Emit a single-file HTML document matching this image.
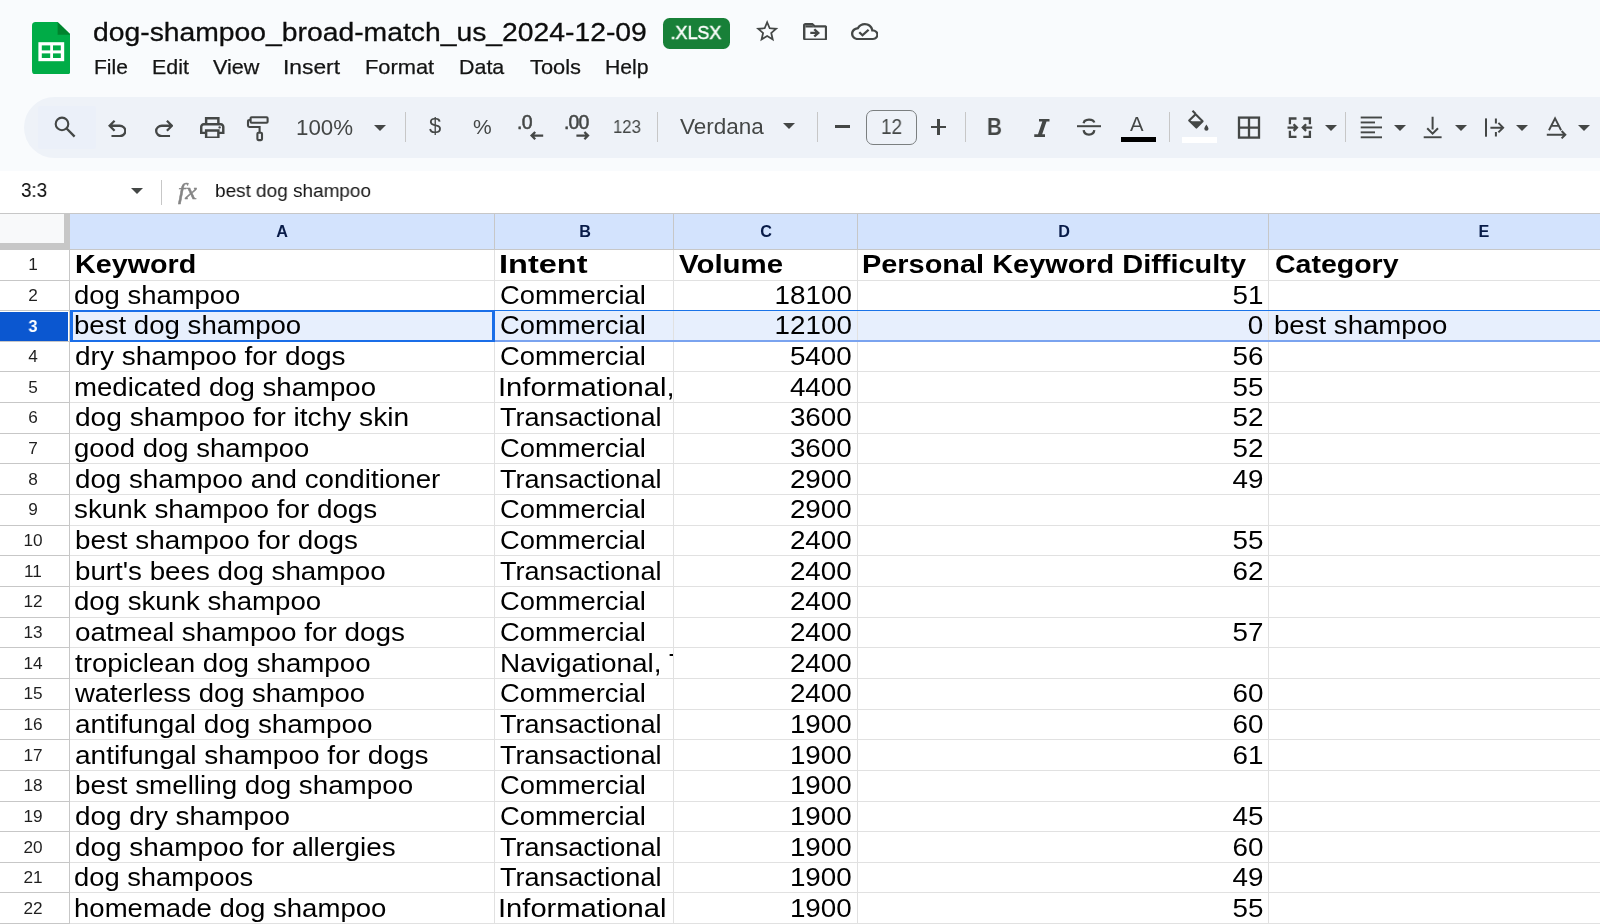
<!DOCTYPE html>
<html><head><meta charset="utf-8"><title>dog-shampoo_broad-match_us_2024-12-09</title>
<style>
html,body{margin:0;padding:0;}
body{width:1600px;height:924px;position:relative;overflow:hidden;background:#fff;font-family:'Liberation Sans', sans-serif;}
.t{position:absolute;white-space:pre;will-change:transform;}
.clip{position:absolute;overflow:hidden;}
svg{display:block;}
</style></head><body>
<div style="position:absolute;left:0.00px;top:0.00px;width:1600.00px;height:170.50px;background:#f9fbfd;"></div>
<svg style="position:absolute;left:31.80px;top:21.50px;" width="38.6" height="52.4" viewBox="0 0 38.6 52.4"><path d="M3.6 0 H25.6 L38.6 12.7 V48.8 Q38.6 52.4 35 52.4 H3.6 Q0 52.4 0 48.8 V3.6 Q0 0 3.6 0Z" fill="#00ac47"/><path d="M25.6 0 L38.6 12.7 H25.6Z" fill="#00832d"/><rect x="6.4" y="20.2" width="25.8" height="19.0" fill="#fff"/><rect x="9.8" y="23.4" width="8.4" height="5.0" fill="#00ac47"/><rect x="21.0" y="23.4" width="7.8" height="5.0" fill="#00ac47"/><rect x="9.8" y="31.4" width="8.4" height="4.6" fill="#00ac47"/><rect x="21.0" y="31.4" width="7.8" height="4.6" fill="#00ac47"/></svg>
<div class="t" style="left:92.50px;top:19.27px;font-size:26.5px;line-height:26.5px;font-weight:400;color:#0d0d0d;transform:scaleX(1.068);transform-origin:left 0;font-family:'Liberation Sans', sans-serif;-webkit-text-stroke:0.3px #0d0d0d;">dog-shampoo_broad-match_us_2024-12-09</div>
<div style="position:absolute;left:663.30px;top:18.30px;width:66.50px;height:30.50px;background:#188038;border-radius:6.5px;"></div>
<div class="t" style="left:696.20px;top:23.92px;font-size:18.4px;line-height:18.4px;font-weight:400;color:#fff;transform:translateX(-50%) scaleX(0.975);font-family:'Liberation Sans', sans-serif;-webkit-text-stroke:0.45px #fff;">.XLSX</div>
<svg preserveAspectRatio="none" style="position:absolute;left:755.50px;top:20.20px;overflow:visible;" width="22.3" height="21.2" viewBox="2 2 20 19"><path d="M22 9.24l-7.19-.62L12 2 9.19 8.63 2 9.24l5.46 4.73L5.82 21 12 17.27 18.18 21l-1.63-7.03L22 9.24zM12 15.4l-3.76 2.27 1-4.28-3.32-2.88 4.38-.38L12 6.1l1.71 4.04 4.38.38-3.32 2.88 1 4.28L12 15.4z" fill="#444746"/></svg>
<svg preserveAspectRatio="none" style="position:absolute;left:803.00px;top:22.70px;" width="24.3" height="17.7" viewBox="2 4 20 16"><path d="M20 6h-8l-2-2H4c-1.1 0-1.99.9-1.99 2L2 18c0 1.1.9 2 2 2h16c1.1 0 2-.9 2-2V8c0-1.1-.9-2-2-2zm0 12H4V6h5.17l2 2H20v10zm-7.84-6H8v2h4.16l-1.59 1.59L11.99 17 16 13.01 11.99 9l-1.41 1.41L12.16 12z" fill="#444746"/><path d="M4 6h5.17l2 2H4z" fill="#444746"/></svg>
<svg preserveAspectRatio="none" style="position:absolute;left:850.70px;top:22.70px;" width="27.6" height="17.0" viewBox="0 4 24 16"><path d="M19.35 10.04C18.67 6.59 15.64 4 12 4 9.11 4 6.6 5.64 5.35 8.04 2.34 8.36 0 10.91 0 14c0 3.31 2.69 6 6 6h13c2.76 0 5-2.24 5-5 0-2.640-2.05-4.78-4.65-4.96zM19 18H6c-2.21 0-4-1.790-4-4 0-2.05 1.53-3.76 3.56-3.97l1.07-.11.5-.95C8.08 7.14 9.94 6 12 6c2.62 0 4.88 1.86 5.39 4.43l.3 1.5 1.53.11c1.56.1 2.78 1.41 2.78 2.96 0 1.65-1.35 3-3 3zm-9-3.82l-2.09-2.09L6.5 13.5 10 17l6.010-6.010-1.41-1.41z" fill="#444746"/></svg>
<div class="t" style="left:94.00px;top:56.22px;font-size:21px;line-height:21px;font-weight:400;color:#141414;font-family:'Liberation Sans', sans-serif;-webkit-text-stroke:0.25px #141414;">File</div>
<div class="t" style="left:152.20px;top:56.22px;font-size:21px;line-height:21px;font-weight:400;color:#141414;transform:scaleX(1.02);transform-origin:left 0;font-family:'Liberation Sans', sans-serif;-webkit-text-stroke:0.25px #141414;">Edit</div>
<div class="t" style="left:213.20px;top:56.22px;font-size:21px;line-height:21px;font-weight:400;color:#141414;transform:scaleX(1.03);transform-origin:left 0;font-family:'Liberation Sans', sans-serif;-webkit-text-stroke:0.25px #141414;">View</div>
<div class="t" style="left:283.00px;top:56.22px;font-size:21px;line-height:21px;font-weight:400;color:#141414;transform:scaleX(1.085);transform-origin:left 0;font-family:'Liberation Sans', sans-serif;-webkit-text-stroke:0.25px #141414;">Insert</div>
<div class="t" style="left:364.60px;top:56.22px;font-size:21px;line-height:21px;font-weight:400;color:#141414;transform:scaleX(1.04);transform-origin:left 0;font-family:'Liberation Sans', sans-serif;-webkit-text-stroke:0.25px #141414;">Format</div>
<div class="t" style="left:459.00px;top:56.22px;font-size:21px;line-height:21px;font-weight:400;color:#141414;transform:scaleX(1.02);transform-origin:left 0;font-family:'Liberation Sans', sans-serif;-webkit-text-stroke:0.25px #141414;">Data</div>
<div class="t" style="left:529.50px;top:56.22px;font-size:21px;line-height:21px;font-weight:400;color:#141414;transform:scaleX(1.04);transform-origin:left 0;font-family:'Liberation Sans', sans-serif;-webkit-text-stroke:0.25px #141414;">Tools</div>
<div class="t" style="left:605.20px;top:56.22px;font-size:21px;line-height:21px;font-weight:400;color:#141414;transform:scaleX(1.01);transform-origin:left 0;font-family:'Liberation Sans', sans-serif;-webkit-text-stroke:0.25px #141414;">Help</div>
<div style="position:absolute;left:24.00px;top:97.20px;width:1640.00px;height:61.30px;background:#eef2f8;border-radius:31px;"></div>
<div style="position:absolute;left:37.80px;top:105.90px;width:58.00px;height:43.00px;background:#ebf0f9;border-radius:2px;"></div>
<svg style="position:absolute;left:50.00px;top:112.00px;" width="30" height="30" viewBox="0 0 30 30"><circle cx="12" cy="11.9" r="6.3" fill="none" stroke="#444746" stroke-width="2.1"/><path d="M16.6 16.5 L24.6 24.6" stroke="#444746" stroke-width="2.3" fill="none"/></svg>
<svg style="position:absolute;left:107.50px;top:120.00px;" width="18.5" height="17.34" viewBox="160 -800 640 600"><path d="M280-200v-80h284q63 0 109.5-40T720-420q0-60-46.5-100T564-560H312l104 104-56 56-200-200 200-200 56 56-104 104h252q97 0 166.5 63T800-420q0 94-69.5 157T564-200H280Z" fill="#444746"/></svg>
<svg style="position:absolute;left:154.60px;top:120.00px;" width="18.5" height="17.34" viewBox="160 -800 640 600"><path d="M396-200q-97 0-166.5-63T160-420q0-94 69.5-157T396-640h252L544-744l56-56 200 200-200 200-56-56 104-104H396q-63 0-109.5 40T240-420q0 60 46.5 100T396-280h284v80H396Z" fill="#444746"/></svg>
<svg preserveAspectRatio="none" style="position:absolute;left:200.20px;top:116.60px;" width="24.5" height="21.4" viewBox="80 -840 800 700"><path d="M640-640v-120H320v120h-80v-200h480v200h-80Zm-480 80h640-640Zm560 100q17 0 28.5-11.5T760-500q0-17-11.5-28.5T720-540q-17 0-28.5 11.5T680-500q0 17 11.5 28.5T720-460Zm-80 260v-160H320v160h320Zm80 80H240v-160H80v-240q0-51 35-85.5t85-34.5h560q51 0 85.5 34.5T880-520v240H720v160Zm80-240v-160q0-17-11.5-28.5T760-560H200q-17 0-28.5 11.5T160-520v160h80v-80h480v80h80Z" fill="#444746"/></svg>
<svg style="position:absolute;left:245.00px;top:114.00px;" width="26" height="30" viewBox="0 0 26 30"><rect x="5.6" y="3.2" width="17" height="5.6" rx="1" fill="none" stroke="#444746" stroke-width="2.1"/><path d="M5.6 6 H4.4 Q3 6 3 7.4 V11.6 Q3 13 4.4 13 H14.6 V18.8" fill="none" stroke="#444746" stroke-width="2.1"/><rect x="12.4" y="18.8" width="4.6" height="7.3" rx="1" fill="none" stroke="#444746" stroke-width="2.1"/></svg>
<div class="t" style="left:296.00px;top:117.12px;font-size:22.3px;line-height:22.3px;font-weight:400;color:#444746;font-family:'Liberation Sans', sans-serif;">100%</div>
<svg style="position:absolute;left:374.20px;top:125.00px;" width="12" height="6" viewBox="0 0 12 6"><path d="M0 0 H12 L6.0 6Z" fill="#444746"/></svg>
<div style="position:absolute;left:404.90px;top:112.30px;width:1.00px;height:30.20px;background:#c7c7c7;"></div>
<div class="t" style="left:428.80px;top:114.88px;font-size:22px;line-height:22px;font-weight:400;color:#444746;font-family:'Liberation Sans', sans-serif;">$</div>
<div class="t" style="left:473.00px;top:116.22px;font-size:21px;line-height:21px;font-weight:400;color:#444746;font-family:'Liberation Sans', sans-serif;">%</div>
<div class="t" style="left:516.80px;top:113.09px;font-size:19.5px;line-height:19.5px;font-weight:400;color:#444746;letter-spacing:-0.6px;font-family:'Liberation Sans', sans-serif;-webkit-text-stroke:0.5px #444746;">.0</div>
<svg style="position:absolute;left:527.00px;top:130.00px;" width="18" height="11" viewBox="0 0 18 11"><path d="M16.2 5.6 H4.6 M8.2 2.0 L4.6 5.6 L8.2 9.2" fill="none" stroke="#444746" stroke-width="2.3"/></svg>
<div class="t" style="left:564.20px;top:113.09px;font-size:19.5px;line-height:19.5px;font-weight:400;color:#444746;letter-spacing:-0.9px;font-family:'Liberation Sans', sans-serif;-webkit-text-stroke:0.5px #444746;">.00</div>
<svg style="position:absolute;left:574.00px;top:130.00px;" width="18" height="11" viewBox="0 0 18 11"><path d="M2.4 5.6 H14 M10.4 2.0 L14 5.6 L10.4 9.2" fill="none" stroke="#444746" stroke-width="2.3"/></svg>
<div class="t" style="left:612.80px;top:117.59px;font-size:18.2px;line-height:18.2px;font-weight:400;color:#444746;transform:scaleX(0.92);transform-origin:left 0;font-family:'Liberation Sans', sans-serif;">123</div>
<div style="position:absolute;left:657.00px;top:112.30px;width:1.00px;height:30.20px;background:#c7c7c7;"></div>
<div class="t" style="left:680.00px;top:115.95px;font-size:22.5px;line-height:22.5px;font-weight:400;color:#444746;font-family:'Liberation Sans', sans-serif;">Verdana</div>
<svg style="position:absolute;left:783.40px;top:123.00px;" width="12" height="6" viewBox="0 0 12 6"><path d="M0 0 H12 L6.0 6Z" fill="#444746"/></svg>
<div style="position:absolute;left:817.30px;top:112.30px;width:1.00px;height:30.20px;background:#c7c7c7;"></div>
<div style="position:absolute;left:834.80px;top:125.30px;width:15.50px;height:2.60px;background:#444746;"></div>
<div style="position:absolute;left:866.00px;top:109.80px;width:50.50px;height:35.00px;border:1.3px solid #7b7f80;border-radius:7px;box-sizing:border-box;"></div>
<div class="t" style="left:881.20px;top:116.60px;font-size:21.5px;line-height:21.5px;font-weight:400;color:#444746;transform:scaleX(0.88);transform-origin:left 0;font-family:'Liberation Sans', sans-serif;">12</div>
<div style="position:absolute;left:930.60px;top:125.80px;width:15.60px;height:2.50px;background:#444746;"></div>
<div style="position:absolute;left:937.20px;top:119.40px;width:2.50px;height:15.40px;background:#444746;"></div>
<div style="position:absolute;left:964.90px;top:112.30px;width:1.00px;height:30.20px;background:#c7c7c7;"></div>
<div class="t" style="left:986.80px;top:115.71px;font-size:23.5px;line-height:23.5px;font-weight:700;color:#444746;transform:scaleX(0.88);transform-origin:left 0;font-family:'Liberation Sans', sans-serif;">B</div>
<svg style="position:absolute;left:1030.00px;top:115.00px;" width="24" height="25" viewBox="0 0 24 25"><path d="M9 3.9H19.5V6.5H9Z M4.25 19.25H15V22H4.25Z M12.4 6.3H16.6L12.1 19.45H7.9Z" fill="#444746"/></svg>
<svg style="position:absolute;left:1075.00px;top:115.00px;" width="28" height="24" viewBox="0 0 28 24"><path d="M2 11.2 H26" stroke="#444746" stroke-width="2" fill="none"/><path d="M8.6 8.2 Q9.2 4.6 14 4.6 Q18.6 4.6 19.3 7.6" stroke="#444746" stroke-width="2.3" fill="none"/><path d="M8.7 15.2 Q9.2 19.6 14 19.6 Q18.8 19.6 19.3 15.2" stroke="#444746" stroke-width="2.3" fill="none"/></svg>
<div class="t" style="left:1130.40px;top:114.12px;font-size:20.3px;line-height:20.3px;font-weight:400;color:#444746;font-family:'Liberation Sans', sans-serif;">A</div>
<div style="position:absolute;left:1121.00px;top:136.90px;width:34.60px;height:5.60px;background:#000;"></div>
<div style="position:absolute;left:1168.90px;top:112.30px;width:1.00px;height:30.20px;background:#c7c7c7;"></div>
<svg style="position:absolute;left:1185.00px;top:108.00px;" width="28" height="26" viewBox="0 0 28 26"><path d="M7.5 2.8 L10.5 5.8" stroke="#444746" stroke-width="2.1" fill="none"/><path d="M10.6 6.2 L17.6 13.2 L11.4 19.6 L4.2 12.6 Z" fill="none" stroke="#444746" stroke-width="2.1" stroke-linejoin="round"/><path d="M4.8 13.2 H17 L11.4 19 Z" fill="#444746"/><path d="M21.4 16.4 Q19.3 19.3 19.3 20.7 A2.1 2.1 0 0 0 23.5 20.7 Q23.5 19.3 21.4 16.4Z" fill="#444746"/></svg>
<div style="position:absolute;left:1181.90px;top:136.50px;width:35.00px;height:6.20px;background:#fff;"></div>
<svg style="position:absolute;left:1236.00px;top:115.00px;" width="26" height="25" viewBox="0 0 26 25"><rect x="3" y="2.6" width="20" height="20" fill="none" stroke="#444746" stroke-width="2.3"/><path d="M13 2.6 V22.6 M3 12.6 H23" stroke="#444746" stroke-width="2.3" fill="none"/></svg>
<svg style="position:absolute;left:1286.00px;top:115.00px;" width="28" height="25" viewBox="0 0 28 25"><path d="M10.5 3.5 H3.9 V9.2 M3.9 15.8 V21.9 H10.5 M17.3 3.5 H23.9 V9.2 M23.9 15.8 V21.9 H17.3" fill="none" stroke="#444746" stroke-width="2.3"/><path d="M1.5 12.6 H10.6 M7.6 9.3 L10.9 12.6 L7.6 15.9 M26.2 12.6 H17.1 M20.1 9.3 L16.8 12.6 L20.1 15.9" fill="none" stroke="#444746" stroke-width="2.3"/></svg>
<svg style="position:absolute;left:1324.80px;top:124.50px;" width="12" height="6" viewBox="0 0 12 6"><path d="M0 0 H12 L6.0 6Z" fill="#444746"/></svg>
<div style="position:absolute;left:1345.10px;top:112.30px;width:1.00px;height:30.20px;background:#c7c7c7;"></div>
<svg style="position:absolute;left:1340.00px;top:105.00px;" width="260" height="40" viewBox="0 0 260 40"><rect x="20.70" y="11.55" width="21.3" height="1.9" fill="#444746"/><rect x="20.70" y="16.50" width="14.3" height="1.9" fill="#444746"/><rect x="20.70" y="21.45" width="21.3" height="1.9" fill="#444746"/><rect x="20.70" y="26.40" width="14.3" height="1.9" fill="#444746"/><rect x="20.70" y="31.35" width="21.3" height="1.9" fill="#444746"/><path d="M92.60 11.80 V24.60 M87.20 23.20 L92.60 28.60 L98.00 23.20" fill="none" stroke="#444746" stroke-width="2"/><rect x="83.70" y="31.30" width="17.9" height="1.9" fill="#444746"/><rect x="145.00" y="13.40" width="2" height="18.3" fill="#444746"/><path d="M155.90 13.60 V18.40 M155.90 26.90 V31.60" fill="none" stroke="#444746" stroke-width="2"/><path d="M150.40 22.65 H163.00 M158.40 17.90 L163.10 22.65 L158.40 27.40" fill="none" stroke="#444746" stroke-width="2"/><path d="M209.00 25.20 L215.05 13.40 L221.10 25.20 M211.20 20.90 H218.90" fill="none" stroke="#444746" stroke-width="1.9"/><path d="M206.80 29.70 H225.00 M221.60 26.00 L225.30 29.70 L221.60 33.40" fill="none" stroke="#444746" stroke-width="2"/></svg>
<svg style="position:absolute;left:1393.50px;top:124.50px;" width="12" height="6" viewBox="0 0 12 6"><path d="M0 0 H12 L6.0 6Z" fill="#444746"/></svg>
<svg style="position:absolute;left:1454.50px;top:124.50px;" width="12" height="6" viewBox="0 0 12 6"><path d="M0 0 H12 L6.0 6Z" fill="#444746"/></svg>
<svg style="position:absolute;left:1515.60px;top:124.50px;" width="12" height="6" viewBox="0 0 12 6"><path d="M0 0 H12 L6.0 6Z" fill="#444746"/></svg>
<svg style="position:absolute;left:1578.00px;top:124.50px;" width="12" height="6" viewBox="0 0 12 6"><path d="M0 0 H12 L6.0 6Z" fill="#444746"/></svg>
<div class="t" style="left:20.80px;top:180.99px;font-size:19.5px;line-height:19.5px;font-weight:400;color:#0a0a0a;transform:scaleX(0.965);transform-origin:left 0;font-family:'Liberation Sans', sans-serif;">3:3</div>
<svg style="position:absolute;left:130.80px;top:187.90px;" width="12" height="6" viewBox="0 0 12 6"><path d="M0 0 H12 L6.0 6Z" fill="#444746"/></svg>
<div style="position:absolute;left:160.80px;top:180.00px;width:1.20px;height:24.50px;background:#c7c7c7;"></div>
<div class="t" style="left:177.80px;top:180.11px;font-size:23.5px;line-height:23.5px;font-weight:400;color:#858585;transform:scaleX(1.12);transform-origin:left 0;font-family:'Liberation Sans', sans-serif;font-style:italic;font-family:'Liberation Serif',serif;-webkit-text-stroke:0.45px #858585;">fx</div>
<div class="t" style="left:214.80px;top:180.95px;font-size:19.2px;line-height:19.2px;font-weight:400;color:#141414;transform:scaleX(0.988);transform-origin:left 0;font-family:'Liberation Sans', sans-serif;">best dog shampoo</div>
<div style="position:absolute;left:0.00px;top:213.00px;width:1600.00px;height:36.55px;background:#d3e3fd;"></div>
<div style="position:absolute;left:0.00px;top:213.00px;width:69.40px;height:36.55px;background:#f8f9fa;"></div>
<div style="position:absolute;left:64.20px;top:213.00px;width:5.60px;height:37.05px;background:#c7c7c7;"></div>
<div style="position:absolute;left:0.00px;top:242.80px;width:69.80px;height:6.90px;background:#c7c7c7;"></div>
<div style="position:absolute;left:0.00px;top:212.50px;width:1600.00px;height:1.00px;background:#c7c7c7;"></div>
<div class="t" style="left:282.38px;top:222.89px;font-size:16.2px;line-height:16.2px;font-weight:700;color:#081b48;transform:translateX(-50%) scaleX(1.0);font-family:'Liberation Sans', sans-serif;">A</div>
<div class="t" style="left:584.53px;top:222.89px;font-size:16.2px;line-height:16.2px;font-weight:700;color:#081b48;transform:translateX(-50%) scaleX(1.0);font-family:'Liberation Sans', sans-serif;">B</div>
<div class="t" style="left:766.25px;top:222.89px;font-size:16.2px;line-height:16.2px;font-weight:700;color:#081b48;transform:translateX(-50%) scaleX(1.0);font-family:'Liberation Sans', sans-serif;">C</div>
<div class="t" style="left:1063.75px;top:222.89px;font-size:16.2px;line-height:16.2px;font-weight:700;color:#081b48;transform:translateX(-50%) scaleX(1.0);font-family:'Liberation Sans', sans-serif;">D</div>
<div class="t" style="left:1484.00px;top:222.89px;font-size:16.2px;line-height:16.2px;font-weight:700;color:#081b48;transform:translateX(-50%) scaleX(1.0);font-family:'Liberation Sans', sans-serif;">E</div>
<div style="position:absolute;left:69.40px;top:310.85px;width:1600.00px;height:30.65px;background:#e7effd;"></div>
<div style="position:absolute;left:0.00px;top:312.25px;width:68.20px;height:28.65px;background:#0b57d0;"></div>
<div style="position:absolute;left:0.00px;top:249.00px;width:1600.00px;height:1.40px;background:#c7c7c7;"></div>
<div style="position:absolute;left:69.40px;top:280.00px;width:1600.00px;height:1.40px;background:#e1e1e1;"></div>
<div style="position:absolute;left:0.00px;top:280.00px;width:69.40px;height:1.40px;background:#c7c7c7;"></div>
<div style="position:absolute;left:69.40px;top:310.00px;width:1600.00px;height:1.40px;background:#e1e1e1;"></div>
<div style="position:absolute;left:0.00px;top:310.00px;width:69.40px;height:1.40px;background:#c7c7c7;"></div>
<div style="position:absolute;left:69.40px;top:341.00px;width:1600.00px;height:1.40px;background:#e1e1e1;"></div>
<div style="position:absolute;left:0.00px;top:341.00px;width:69.40px;height:1.40px;background:#c7c7c7;"></div>
<div style="position:absolute;left:69.40px;top:371.00px;width:1600.00px;height:1.40px;background:#e1e1e1;"></div>
<div style="position:absolute;left:0.00px;top:371.00px;width:69.40px;height:1.40px;background:#c7c7c7;"></div>
<div style="position:absolute;left:69.40px;top:402.00px;width:1600.00px;height:1.40px;background:#e1e1e1;"></div>
<div style="position:absolute;left:0.00px;top:402.00px;width:69.40px;height:1.40px;background:#c7c7c7;"></div>
<div style="position:absolute;left:69.40px;top:433.00px;width:1600.00px;height:1.40px;background:#e1e1e1;"></div>
<div style="position:absolute;left:0.00px;top:433.00px;width:69.40px;height:1.40px;background:#c7c7c7;"></div>
<div style="position:absolute;left:69.40px;top:463.00px;width:1600.00px;height:1.40px;background:#e1e1e1;"></div>
<div style="position:absolute;left:0.00px;top:463.00px;width:69.40px;height:1.40px;background:#c7c7c7;"></div>
<div style="position:absolute;left:69.40px;top:494.00px;width:1600.00px;height:1.40px;background:#e1e1e1;"></div>
<div style="position:absolute;left:0.00px;top:494.00px;width:69.40px;height:1.40px;background:#c7c7c7;"></div>
<div style="position:absolute;left:69.40px;top:525.00px;width:1600.00px;height:1.40px;background:#e1e1e1;"></div>
<div style="position:absolute;left:0.00px;top:525.00px;width:69.40px;height:1.40px;background:#c7c7c7;"></div>
<div style="position:absolute;left:69.40px;top:555.00px;width:1600.00px;height:1.40px;background:#e1e1e1;"></div>
<div style="position:absolute;left:0.00px;top:555.00px;width:69.40px;height:1.40px;background:#c7c7c7;"></div>
<div style="position:absolute;left:69.40px;top:586.00px;width:1600.00px;height:1.40px;background:#e1e1e1;"></div>
<div style="position:absolute;left:0.00px;top:586.00px;width:69.40px;height:1.40px;background:#c7c7c7;"></div>
<div style="position:absolute;left:69.40px;top:617.00px;width:1600.00px;height:1.40px;background:#e1e1e1;"></div>
<div style="position:absolute;left:0.00px;top:617.00px;width:69.40px;height:1.40px;background:#c7c7c7;"></div>
<div style="position:absolute;left:69.40px;top:647.00px;width:1600.00px;height:1.40px;background:#e1e1e1;"></div>
<div style="position:absolute;left:0.00px;top:647.00px;width:69.40px;height:1.40px;background:#c7c7c7;"></div>
<div style="position:absolute;left:69.40px;top:678.00px;width:1600.00px;height:1.40px;background:#e1e1e1;"></div>
<div style="position:absolute;left:0.00px;top:678.00px;width:69.40px;height:1.40px;background:#c7c7c7;"></div>
<div style="position:absolute;left:69.40px;top:709.00px;width:1600.00px;height:1.40px;background:#e1e1e1;"></div>
<div style="position:absolute;left:0.00px;top:709.00px;width:69.40px;height:1.40px;background:#c7c7c7;"></div>
<div style="position:absolute;left:69.40px;top:739.00px;width:1600.00px;height:1.40px;background:#e1e1e1;"></div>
<div style="position:absolute;left:0.00px;top:739.00px;width:69.40px;height:1.40px;background:#c7c7c7;"></div>
<div style="position:absolute;left:69.40px;top:770.00px;width:1600.00px;height:1.40px;background:#e1e1e1;"></div>
<div style="position:absolute;left:0.00px;top:770.00px;width:69.40px;height:1.40px;background:#c7c7c7;"></div>
<div style="position:absolute;left:69.40px;top:801.00px;width:1600.00px;height:1.40px;background:#e1e1e1;"></div>
<div style="position:absolute;left:0.00px;top:801.00px;width:69.40px;height:1.40px;background:#c7c7c7;"></div>
<div style="position:absolute;left:69.40px;top:831.00px;width:1600.00px;height:1.40px;background:#e1e1e1;"></div>
<div style="position:absolute;left:0.00px;top:831.00px;width:69.40px;height:1.40px;background:#c7c7c7;"></div>
<div style="position:absolute;left:69.40px;top:862.00px;width:1600.00px;height:1.40px;background:#e1e1e1;"></div>
<div style="position:absolute;left:0.00px;top:862.00px;width:69.40px;height:1.40px;background:#c7c7c7;"></div>
<div style="position:absolute;left:69.40px;top:892.00px;width:1600.00px;height:1.40px;background:#e1e1e1;"></div>
<div style="position:absolute;left:0.00px;top:892.00px;width:69.40px;height:1.40px;background:#c7c7c7;"></div>
<div style="position:absolute;left:69.40px;top:923.00px;width:1600.00px;height:1.40px;background:#e1e1e1;"></div>
<div style="position:absolute;left:0.00px;top:923.00px;width:69.40px;height:1.40px;background:#c7c7c7;"></div>
<div style="position:absolute;left:493.75px;top:213.00px;width:1.20px;height:36.55px;background:#c7c7c7;"></div>
<div style="position:absolute;left:493.75px;top:249.55px;width:1.20px;height:674.45px;background:#e1e1e1;"></div>
<div style="position:absolute;left:673.10px;top:213.00px;width:1.20px;height:36.55px;background:#c7c7c7;"></div>
<div style="position:absolute;left:673.10px;top:249.55px;width:1.20px;height:674.45px;background:#e1e1e1;"></div>
<div style="position:absolute;left:857.20px;top:213.00px;width:1.20px;height:36.55px;background:#c7c7c7;"></div>
<div style="position:absolute;left:857.20px;top:249.55px;width:1.20px;height:674.45px;background:#e1e1e1;"></div>
<div style="position:absolute;left:1268.10px;top:213.00px;width:1.20px;height:36.55px;background:#c7c7c7;"></div>
<div style="position:absolute;left:1268.10px;top:249.55px;width:1.20px;height:674.45px;background:#e1e1e1;"></div>
<div style="position:absolute;left:68.80px;top:249.55px;width:1.30px;height:674.45px;background:#c7c7c7;"></div>
<div class="t" style="left:33.00px;top:256.19px;font-size:17.2px;line-height:17.2px;font-weight:400;color:#1f1f1f;transform:translateX(-50%) scaleX(1.0);font-family:'Liberation Sans', sans-serif;">1</div>
<div class="t" style="left:33.00px;top:286.84px;font-size:17.2px;line-height:17.2px;font-weight:400;color:#1f1f1f;transform:translateX(-50%) scaleX(1.0);font-family:'Liberation Sans', sans-serif;">2</div>
<div class="t" style="left:33.20px;top:318.49px;font-size:17.2px;line-height:17.2px;font-weight:700;color:#fff;transform:translateX(-50%) scaleX(0.95);font-family:'Liberation Sans', sans-serif;">3</div>
<div class="t" style="left:33.00px;top:348.14px;font-size:17.2px;line-height:17.2px;font-weight:400;color:#1f1f1f;transform:translateX(-50%) scaleX(1.0);font-family:'Liberation Sans', sans-serif;">4</div>
<div class="t" style="left:33.00px;top:378.79px;font-size:17.2px;line-height:17.2px;font-weight:400;color:#1f1f1f;transform:translateX(-50%) scaleX(1.0);font-family:'Liberation Sans', sans-serif;">5</div>
<div class="t" style="left:33.00px;top:409.44px;font-size:17.2px;line-height:17.2px;font-weight:400;color:#1f1f1f;transform:translateX(-50%) scaleX(1.0);font-family:'Liberation Sans', sans-serif;">6</div>
<div class="t" style="left:33.00px;top:440.09px;font-size:17.2px;line-height:17.2px;font-weight:400;color:#1f1f1f;transform:translateX(-50%) scaleX(1.0);font-family:'Liberation Sans', sans-serif;">7</div>
<div class="t" style="left:33.00px;top:470.74px;font-size:17.2px;line-height:17.2px;font-weight:400;color:#1f1f1f;transform:translateX(-50%) scaleX(1.0);font-family:'Liberation Sans', sans-serif;">8</div>
<div class="t" style="left:33.00px;top:501.39px;font-size:17.2px;line-height:17.2px;font-weight:400;color:#1f1f1f;transform:translateX(-50%) scaleX(1.0);font-family:'Liberation Sans', sans-serif;">9</div>
<div class="t" style="left:33.00px;top:532.04px;font-size:17.2px;line-height:17.2px;font-weight:400;color:#1f1f1f;transform:translateX(-50%) scaleX(1.0);font-family:'Liberation Sans', sans-serif;">10</div>
<div class="t" style="left:33.00px;top:562.69px;font-size:17.2px;line-height:17.2px;font-weight:400;color:#1f1f1f;transform:translateX(-50%) scaleX(1.0);font-family:'Liberation Sans', sans-serif;">11</div>
<div class="t" style="left:33.00px;top:593.34px;font-size:17.2px;line-height:17.2px;font-weight:400;color:#1f1f1f;transform:translateX(-50%) scaleX(1.0);font-family:'Liberation Sans', sans-serif;">12</div>
<div class="t" style="left:33.00px;top:623.99px;font-size:17.2px;line-height:17.2px;font-weight:400;color:#1f1f1f;transform:translateX(-50%) scaleX(1.0);font-family:'Liberation Sans', sans-serif;">13</div>
<div class="t" style="left:33.00px;top:654.64px;font-size:17.2px;line-height:17.2px;font-weight:400;color:#1f1f1f;transform:translateX(-50%) scaleX(1.0);font-family:'Liberation Sans', sans-serif;">14</div>
<div class="t" style="left:33.00px;top:685.29px;font-size:17.2px;line-height:17.2px;font-weight:400;color:#1f1f1f;transform:translateX(-50%) scaleX(1.0);font-family:'Liberation Sans', sans-serif;">15</div>
<div class="t" style="left:33.00px;top:715.94px;font-size:17.2px;line-height:17.2px;font-weight:400;color:#1f1f1f;transform:translateX(-50%) scaleX(1.0);font-family:'Liberation Sans', sans-serif;">16</div>
<div class="t" style="left:33.00px;top:746.59px;font-size:17.2px;line-height:17.2px;font-weight:400;color:#1f1f1f;transform:translateX(-50%) scaleX(1.0);font-family:'Liberation Sans', sans-serif;">17</div>
<div class="t" style="left:33.00px;top:777.24px;font-size:17.2px;line-height:17.2px;font-weight:400;color:#1f1f1f;transform:translateX(-50%) scaleX(1.0);font-family:'Liberation Sans', sans-serif;">18</div>
<div class="t" style="left:33.00px;top:807.89px;font-size:17.2px;line-height:17.2px;font-weight:400;color:#1f1f1f;transform:translateX(-50%) scaleX(1.0);font-family:'Liberation Sans', sans-serif;">19</div>
<div class="t" style="left:33.00px;top:838.54px;font-size:17.2px;line-height:17.2px;font-weight:400;color:#1f1f1f;transform:translateX(-50%) scaleX(1.0);font-family:'Liberation Sans', sans-serif;">20</div>
<div class="t" style="left:33.00px;top:869.19px;font-size:17.2px;line-height:17.2px;font-weight:400;color:#1f1f1f;transform:translateX(-50%) scaleX(1.0);font-family:'Liberation Sans', sans-serif;">21</div>
<div class="t" style="left:33.00px;top:899.84px;font-size:17.2px;line-height:17.2px;font-weight:400;color:#1f1f1f;transform:translateX(-50%) scaleX(1.0);font-family:'Liberation Sans', sans-serif;">22</div>
<div class="t" style="left:75.00px;top:252.16px;font-size:25.5px;line-height:25.5px;font-weight:700;transform:scaleX(1.12504);transform-origin:left 0;">Keyword</div>
<div class="t" style="left:679.31px;top:252.16px;font-size:25.5px;line-height:25.5px;font-weight:700;transform:scaleX(1.15426);transform-origin:left 0;">Volume</div>
<div class="t" style="left:862.39px;top:252.16px;font-size:25.5px;line-height:25.5px;font-weight:700;transform:scaleX(1.13391);transform-origin:left 0;">Personal Keyword Difficulty</div>
<div class="t" style="left:1274.51px;top:252.16px;font-size:25.5px;line-height:25.5px;font-weight:700;transform:scaleX(1.11772);transform-origin:left 0;">Category</div>
<div class="t" style="left:74.20px;top:282.81px;font-size:25.5px;line-height:25.5px;font-weight:400;transform:scaleX(1.07610);transform-origin:left 0;">dog shampoo</div>
<div class="t" style="right:748.20px;top:282.81px;font-size:25.5px;line-height:25.5px;font-weight:400;color:#000;transform:scaleX(1.09);transform-origin:right 0;font-family:'Liberation Sans', sans-serif;">18100</div>
<div class="t" style="right:336.70px;top:282.81px;font-size:25.5px;line-height:25.5px;font-weight:400;color:#000;transform:scaleX(1.09);transform-origin:right 0;font-family:'Liberation Sans', sans-serif;">51</div>
<div class="t" style="left:74.20px;top:313.46px;font-size:25.5px;line-height:25.5px;font-weight:400;transform:scaleX(1.08291);transform-origin:left 0;">best dog shampoo</div>
<div class="t" style="right:748.20px;top:313.46px;font-size:25.5px;line-height:25.5px;font-weight:400;color:#000;transform:scaleX(1.09);transform-origin:right 0;font-family:'Liberation Sans', sans-serif;">12100</div>
<div class="t" style="right:336.70px;top:313.46px;font-size:25.5px;line-height:25.5px;font-weight:400;color:#000;transform:scaleX(1.09);transform-origin:right 0;font-family:'Liberation Sans', sans-serif;">0</div>
<div class="t" style="left:1273.50px;top:313.46px;font-size:25.5px;line-height:25.5px;font-weight:400;transform:scaleX(1.08255);transform-origin:left 0;">best shampoo</div>
<div class="t" style="left:75.19px;top:344.11px;font-size:25.5px;line-height:25.5px;font-weight:400;transform:scaleX(1.09719);transform-origin:left 0;">dry shampoo for dogs</div>
<div class="t" style="right:748.20px;top:344.11px;font-size:25.5px;line-height:25.5px;font-weight:400;color:#000;transform:scaleX(1.09);transform-origin:right 0;font-family:'Liberation Sans', sans-serif;">5400</div>
<div class="t" style="right:336.70px;top:344.11px;font-size:25.5px;line-height:25.5px;font-weight:400;color:#000;transform:scaleX(1.09);transform-origin:right 0;font-family:'Liberation Sans', sans-serif;">56</div>
<div class="t" style="left:74.20px;top:374.76px;font-size:25.5px;line-height:25.5px;font-weight:400;transform:scaleX(1.08146);transform-origin:left 0;">medicated dog shampoo</div>
<div class="t" style="right:748.20px;top:374.76px;font-size:25.5px;line-height:25.5px;font-weight:400;color:#000;transform:scaleX(1.09);transform-origin:right 0;font-family:'Liberation Sans', sans-serif;">4400</div>
<div class="t" style="right:336.70px;top:374.76px;font-size:25.5px;line-height:25.5px;font-weight:400;color:#000;transform:scaleX(1.09);transform-origin:right 0;font-family:'Liberation Sans', sans-serif;">55</div>
<div class="t" style="left:75.19px;top:405.41px;font-size:25.5px;line-height:25.5px;font-weight:400;transform:scaleX(1.10127);transform-origin:left 0;">dog shampoo for itchy skin</div>
<div class="t" style="right:748.20px;top:405.41px;font-size:25.5px;line-height:25.5px;font-weight:400;color:#000;transform:scaleX(1.09);transform-origin:right 0;font-family:'Liberation Sans', sans-serif;">3600</div>
<div class="t" style="right:336.70px;top:405.41px;font-size:25.5px;line-height:25.5px;font-weight:400;color:#000;transform:scaleX(1.09);transform-origin:right 0;font-family:'Liberation Sans', sans-serif;">52</div>
<div class="t" style="left:74.20px;top:436.06px;font-size:25.5px;line-height:25.5px;font-weight:400;transform:scaleX(1.07725);transform-origin:left 0;">good dog shampoo</div>
<div class="t" style="right:748.20px;top:436.06px;font-size:25.5px;line-height:25.5px;font-weight:400;color:#000;transform:scaleX(1.09);transform-origin:right 0;font-family:'Liberation Sans', sans-serif;">3600</div>
<div class="t" style="right:336.70px;top:436.06px;font-size:25.5px;line-height:25.5px;font-weight:400;color:#000;transform:scaleX(1.09);transform-origin:right 0;font-family:'Liberation Sans', sans-serif;">52</div>
<div class="t" style="left:75.19px;top:466.71px;font-size:25.5px;line-height:25.5px;font-weight:400;transform:scaleX(1.08719);transform-origin:left 0;">dog shampoo and conditioner</div>
<div class="t" style="right:748.20px;top:466.71px;font-size:25.5px;line-height:25.5px;font-weight:400;color:#000;transform:scaleX(1.09);transform-origin:right 0;font-family:'Liberation Sans', sans-serif;">2900</div>
<div class="t" style="right:336.70px;top:466.71px;font-size:25.5px;line-height:25.5px;font-weight:400;color:#000;transform:scaleX(1.09);transform-origin:right 0;font-family:'Liberation Sans', sans-serif;">49</div>
<div class="t" style="left:74.19px;top:497.36px;font-size:25.5px;line-height:25.5px;font-weight:400;transform:scaleX(1.09160);transform-origin:left 0;">skunk shampoo for dogs</div>
<div class="t" style="right:748.20px;top:497.36px;font-size:25.5px;line-height:25.5px;font-weight:400;color:#000;transform:scaleX(1.09);transform-origin:right 0;font-family:'Liberation Sans', sans-serif;">2900</div>
<div class="t" style="left:75.19px;top:528.01px;font-size:25.5px;line-height:25.5px;font-weight:400;transform:scaleX(1.09092);transform-origin:left 0;">best shampoo for dogs</div>
<div class="t" style="right:748.20px;top:528.01px;font-size:25.5px;line-height:25.5px;font-weight:400;color:#000;transform:scaleX(1.09);transform-origin:right 0;font-family:'Liberation Sans', sans-serif;">2400</div>
<div class="t" style="right:336.70px;top:528.01px;font-size:25.5px;line-height:25.5px;font-weight:400;color:#000;transform:scaleX(1.09);transform-origin:right 0;font-family:'Liberation Sans', sans-serif;">55</div>
<div class="t" style="left:75.19px;top:558.66px;font-size:25.5px;line-height:25.5px;font-weight:400;transform:scaleX(1.08779);transform-origin:left 0;">burt's bees dog shampoo</div>
<div class="t" style="right:748.20px;top:558.66px;font-size:25.5px;line-height:25.5px;font-weight:400;color:#000;transform:scaleX(1.09);transform-origin:right 0;font-family:'Liberation Sans', sans-serif;">2400</div>
<div class="t" style="right:336.70px;top:558.66px;font-size:25.5px;line-height:25.5px;font-weight:400;color:#000;transform:scaleX(1.09);transform-origin:right 0;font-family:'Liberation Sans', sans-serif;">62</div>
<div class="t" style="left:74.20px;top:589.31px;font-size:25.5px;line-height:25.5px;font-weight:400;transform:scaleX(1.08266);transform-origin:left 0;">dog skunk shampoo</div>
<div class="t" style="right:748.20px;top:589.31px;font-size:25.5px;line-height:25.5px;font-weight:400;color:#000;transform:scaleX(1.09);transform-origin:right 0;font-family:'Liberation Sans', sans-serif;">2400</div>
<div class="t" style="left:75.19px;top:619.96px;font-size:25.5px;line-height:25.5px;font-weight:400;transform:scaleX(1.09267);transform-origin:left 0;">oatmeal shampoo for dogs</div>
<div class="t" style="right:748.20px;top:619.96px;font-size:25.5px;line-height:25.5px;font-weight:400;color:#000;transform:scaleX(1.09);transform-origin:right 0;font-family:'Liberation Sans', sans-serif;">2400</div>
<div class="t" style="right:336.70px;top:619.96px;font-size:25.5px;line-height:25.5px;font-weight:400;color:#000;transform:scaleX(1.09);transform-origin:right 0;font-family:'Liberation Sans', sans-serif;">57</div>
<div class="t" style="left:75.20px;top:650.61px;font-size:25.5px;line-height:25.5px;font-weight:400;transform:scaleX(1.08590);transform-origin:left 0;">tropiclean dog shampoo</div>
<div class="t" style="right:748.20px;top:650.61px;font-size:25.5px;line-height:25.5px;font-weight:400;color:#000;transform:scaleX(1.09);transform-origin:right 0;font-family:'Liberation Sans', sans-serif;">2400</div>
<div class="t" style="left:75.20px;top:681.26px;font-size:25.5px;line-height:25.5px;font-weight:400;transform:scaleX(1.07703);transform-origin:left 0;">waterless dog shampoo</div>
<div class="t" style="right:748.20px;top:681.26px;font-size:25.5px;line-height:25.5px;font-weight:400;color:#000;transform:scaleX(1.09);transform-origin:right 0;font-family:'Liberation Sans', sans-serif;">2400</div>
<div class="t" style="right:336.70px;top:681.26px;font-size:25.5px;line-height:25.5px;font-weight:400;color:#000;transform:scaleX(1.09);transform-origin:right 0;font-family:'Liberation Sans', sans-serif;">60</div>
<div class="t" style="left:75.19px;top:711.91px;font-size:25.5px;line-height:25.5px;font-weight:400;transform:scaleX(1.09332);transform-origin:left 0;">antifungal dog shampoo</div>
<div class="t" style="right:748.20px;top:711.91px;font-size:25.5px;line-height:25.5px;font-weight:400;color:#000;transform:scaleX(1.09);transform-origin:right 0;font-family:'Liberation Sans', sans-serif;">1900</div>
<div class="t" style="right:336.70px;top:711.91px;font-size:25.5px;line-height:25.5px;font-weight:400;color:#000;transform:scaleX(1.09);transform-origin:right 0;font-family:'Liberation Sans', sans-serif;">60</div>
<div class="t" style="left:75.19px;top:742.56px;font-size:25.5px;line-height:25.5px;font-weight:400;transform:scaleX(1.09879);transform-origin:left 0;">antifungal shampoo for dogs</div>
<div class="t" style="right:748.20px;top:742.56px;font-size:25.5px;line-height:25.5px;font-weight:400;color:#000;transform:scaleX(1.09);transform-origin:right 0;font-family:'Liberation Sans', sans-serif;">1900</div>
<div class="t" style="right:336.70px;top:742.56px;font-size:25.5px;line-height:25.5px;font-weight:400;color:#000;transform:scaleX(1.09);transform-origin:right 0;font-family:'Liberation Sans', sans-serif;">61</div>
<div class="t" style="left:75.19px;top:773.21px;font-size:25.5px;line-height:25.5px;font-weight:400;transform:scaleX(1.08911);transform-origin:left 0;">best smelling dog shampoo</div>
<div class="t" style="right:748.20px;top:773.21px;font-size:25.5px;line-height:25.5px;font-weight:400;color:#000;transform:scaleX(1.09);transform-origin:right 0;font-family:'Liberation Sans', sans-serif;">1900</div>
<div class="t" style="left:75.19px;top:803.86px;font-size:25.5px;line-height:25.5px;font-weight:400;transform:scaleX(1.09127);transform-origin:left 0;">dog dry shampoo</div>
<div class="t" style="right:748.20px;top:803.86px;font-size:25.5px;line-height:25.5px;font-weight:400;color:#000;transform:scaleX(1.09);transform-origin:right 0;font-family:'Liberation Sans', sans-serif;">1900</div>
<div class="t" style="right:336.70px;top:803.86px;font-size:25.5px;line-height:25.5px;font-weight:400;color:#000;transform:scaleX(1.09);transform-origin:right 0;font-family:'Liberation Sans', sans-serif;">45</div>
<div class="t" style="left:75.19px;top:834.51px;font-size:25.5px;line-height:25.5px;font-weight:400;transform:scaleX(1.09303);transform-origin:left 0;">dog shampoo for allergies</div>
<div class="t" style="right:748.20px;top:834.51px;font-size:25.5px;line-height:25.5px;font-weight:400;color:#000;transform:scaleX(1.09);transform-origin:right 0;font-family:'Liberation Sans', sans-serif;">1900</div>
<div class="t" style="right:336.70px;top:834.51px;font-size:25.5px;line-height:25.5px;font-weight:400;color:#000;transform:scaleX(1.09);transform-origin:right 0;font-family:'Liberation Sans', sans-serif;">60</div>
<div class="t" style="left:74.21px;top:865.16px;font-size:25.5px;line-height:25.5px;font-weight:400;transform:scaleX(1.07157);transform-origin:left 0;">dog shampoos</div>
<div class="t" style="right:748.20px;top:865.16px;font-size:25.5px;line-height:25.5px;font-weight:400;color:#000;transform:scaleX(1.09);transform-origin:right 0;font-family:'Liberation Sans', sans-serif;">1900</div>
<div class="t" style="right:336.70px;top:865.16px;font-size:25.5px;line-height:25.5px;font-weight:400;color:#000;transform:scaleX(1.09);transform-origin:right 0;font-family:'Liberation Sans', sans-serif;">49</div>
<div class="t" style="left:74.20px;top:895.81px;font-size:25.5px;line-height:25.5px;font-weight:400;transform:scaleX(1.08000);transform-origin:left 0;">homemade dog shampoo</div>
<div class="t" style="right:748.20px;top:895.81px;font-size:25.5px;line-height:25.5px;font-weight:400;color:#000;transform:scaleX(1.09);transform-origin:right 0;font-family:'Liberation Sans', sans-serif;">1900</div>
<div class="t" style="right:336.70px;top:895.81px;font-size:25.5px;line-height:25.5px;font-weight:400;color:#000;transform:scaleX(1.09);transform-origin:right 0;font-family:'Liberation Sans', sans-serif;">55</div>
<div class="clip" style="left:494.35px;top:249.55px;width:178.75px;height:30.65px;"><div class="t" style="left:4.33px;top:2.61px;font-size:25.5px;line-height:25.5px;font-weight:700;transform:scaleX(1.27606);transform-origin:left 0;">Intent</div></div>
<div class="clip" style="left:494.35px;top:280.20px;width:178.75px;height:30.65px;"><div class="t" style="left:5.61px;top:2.61px;font-size:25.5px;line-height:25.5px;font-weight:400;transform:scaleX(1.07250);transform-origin:left 0;">Commercial</div></div>
<div class="clip" style="left:494.35px;top:310.85px;width:178.75px;height:30.65px;"><div class="t" style="left:5.61px;top:2.61px;font-size:25.5px;line-height:25.5px;font-weight:400;transform:scaleX(1.07250);transform-origin:left 0;">Commercial</div></div>
<div class="clip" style="left:494.35px;top:341.50px;width:178.75px;height:30.65px;"><div class="t" style="left:5.61px;top:2.61px;font-size:25.5px;line-height:25.5px;font-weight:400;transform:scaleX(1.07250);transform-origin:left 0;">Commercial</div></div>
<div class="clip" style="left:494.35px;top:372.15px;width:178.75px;height:30.65px;"><div class="t" style="left:3.42px;top:2.61px;font-size:25.5px;line-height:25.5px;font-weight:400;transform:scaleX(1.14314);transform-origin:left 0;">Informational,</div></div>
<div class="clip" style="left:494.35px;top:402.80px;width:178.75px;height:30.65px;"><div class="t" style="left:5.62px;top:2.61px;font-size:25.5px;line-height:25.5px;font-weight:400;transform:scaleX(1.06136);transform-origin:left 0;">Transactional</div></div>
<div class="clip" style="left:494.35px;top:433.45px;width:178.75px;height:30.65px;"><div class="t" style="left:5.61px;top:2.61px;font-size:25.5px;line-height:25.5px;font-weight:400;transform:scaleX(1.07250);transform-origin:left 0;">Commercial</div></div>
<div class="clip" style="left:494.35px;top:464.10px;width:178.75px;height:30.65px;"><div class="t" style="left:5.62px;top:2.61px;font-size:25.5px;line-height:25.5px;font-weight:400;transform:scaleX(1.06136);transform-origin:left 0;">Transactional</div></div>
<div class="clip" style="left:494.35px;top:494.75px;width:178.75px;height:30.65px;"><div class="t" style="left:5.61px;top:2.61px;font-size:25.5px;line-height:25.5px;font-weight:400;transform:scaleX(1.07250);transform-origin:left 0;">Commercial</div></div>
<div class="clip" style="left:494.35px;top:525.40px;width:178.75px;height:30.65px;"><div class="t" style="left:5.61px;top:2.61px;font-size:25.5px;line-height:25.5px;font-weight:400;transform:scaleX(1.07250);transform-origin:left 0;">Commercial</div></div>
<div class="clip" style="left:494.35px;top:556.05px;width:178.75px;height:30.65px;"><div class="t" style="left:5.62px;top:2.61px;font-size:25.5px;line-height:25.5px;font-weight:400;transform:scaleX(1.06136);transform-origin:left 0;">Transactional</div></div>
<div class="clip" style="left:494.35px;top:586.70px;width:178.75px;height:30.65px;"><div class="t" style="left:5.61px;top:2.61px;font-size:25.5px;line-height:25.5px;font-weight:400;transform:scaleX(1.07250);transform-origin:left 0;">Commercial</div></div>
<div class="clip" style="left:494.35px;top:617.35px;width:178.75px;height:30.65px;"><div class="t" style="left:5.61px;top:2.61px;font-size:25.5px;line-height:25.5px;font-weight:400;transform:scaleX(1.07250);transform-origin:left 0;">Commercial</div></div>
<div class="clip" style="left:494.35px;top:648.00px;width:178.75px;height:30.65px;"><div class="t" style="left:5.57px;top:2.61px;font-size:25.5px;line-height:25.5px;font-weight:400;transform:scaleX(1.09534);transform-origin:left 0;">Navigational,</div><div class="t" style="left:174.65px;top:2.61px;font-size:25.5px;line-height:25.5px;font-weight:400;transform:scaleX(1.09534);transform-origin:left 0;">T</div></div>
<div class="clip" style="left:494.35px;top:678.65px;width:178.75px;height:30.65px;"><div class="t" style="left:5.61px;top:2.61px;font-size:25.5px;line-height:25.5px;font-weight:400;transform:scaleX(1.07250);transform-origin:left 0;">Commercial</div></div>
<div class="clip" style="left:494.35px;top:709.30px;width:178.75px;height:30.65px;"><div class="t" style="left:5.62px;top:2.61px;font-size:25.5px;line-height:25.5px;font-weight:400;transform:scaleX(1.06136);transform-origin:left 0;">Transactional</div></div>
<div class="clip" style="left:494.35px;top:739.95px;width:178.75px;height:30.65px;"><div class="t" style="left:5.62px;top:2.61px;font-size:25.5px;line-height:25.5px;font-weight:400;transform:scaleX(1.06136);transform-origin:left 0;">Transactional</div></div>
<div class="clip" style="left:494.35px;top:770.60px;width:178.75px;height:30.65px;"><div class="t" style="left:5.61px;top:2.61px;font-size:25.5px;line-height:25.5px;font-weight:400;transform:scaleX(1.07250);transform-origin:left 0;">Commercial</div></div>
<div class="clip" style="left:494.35px;top:801.25px;width:178.75px;height:30.65px;"><div class="t" style="left:5.61px;top:2.61px;font-size:25.5px;line-height:25.5px;font-weight:400;transform:scaleX(1.07250);transform-origin:left 0;">Commercial</div></div>
<div class="clip" style="left:494.35px;top:831.90px;width:178.75px;height:30.65px;"><div class="t" style="left:5.62px;top:2.61px;font-size:25.5px;line-height:25.5px;font-weight:400;transform:scaleX(1.06136);transform-origin:left 0;">Transactional</div></div>
<div class="clip" style="left:494.35px;top:862.55px;width:178.75px;height:30.65px;"><div class="t" style="left:5.62px;top:2.61px;font-size:25.5px;line-height:25.5px;font-weight:400;transform:scaleX(1.06136);transform-origin:left 0;">Transactional</div></div>
<div class="clip" style="left:494.35px;top:893.20px;width:178.75px;height:30.65px;"><div class="t" style="left:3.42px;top:2.61px;font-size:25.5px;line-height:25.5px;font-weight:400;transform:scaleX(1.14314);transform-origin:left 0;">Informational</div></div>
<div style="position:absolute;left:494.35px;top:310.00px;width:1600.00px;height:1.35px;background:#1a73e8;"></div>
<div style="position:absolute;left:494.35px;top:340.40px;width:1600.00px;height:1.30px;background:#7aa3ef;"></div>
<div style="position:absolute;left:70.00px;top:310.00px;width:425.00px;height:2.45px;background:#1a6ee8;"></div>
<div style="position:absolute;left:70.00px;top:339.50px;width:425.00px;height:2.40px;background:#1a6ee8;"></div>
<div style="position:absolute;left:70.00px;top:310.00px;width:2.50px;height:31.90px;background:#1a6ee8;"></div>
<div style="position:absolute;left:492.40px;top:310.00px;width:2.60px;height:31.90px;background:#1a6ee8;"></div>
</body></html>
